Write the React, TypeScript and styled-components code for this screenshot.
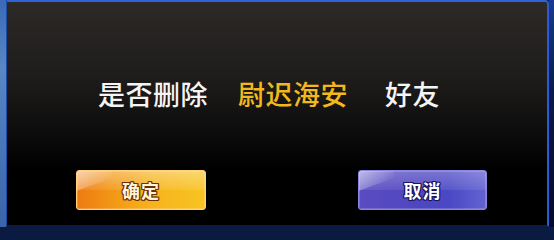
import styled, { createGlobalStyle } from "styled-components";

const GlobalStyle = createGlobalStyle`
	html, body {
		margin: 0;
		padding: 0;
		background: #0a1a40;
		overflow: hidden;
	}
`;

const Screen = styled.div`
	display: flex;
	width: 554px;
	height: 227px;
	font-family: "Noto Sans CJK SC", "Noto Sans", sans-serif;
`;

const SideStrip = styled.div<{ $tone: "light" | "dark" }>`
	width: ${(p) => (p.$tone === "light" ? "6px" : "5px")};
	background: ${(p) =>
		p.$tone === "light"
			? "linear-gradient(to bottom, #3a6ab8, #5a86c4 30%, #4a78b8 60%, #3a64a8)"
			: "linear-gradient(to bottom, #1a3a90, #0a1a50 40%, #050a28)"};
`;

const Panel = styled.div`
	flex: 1;
	display: flex;
	flex-direction: column;
	border-top: 2px solid #2f64d8;
	border-right: 2px solid #2a5cd0;
	border-left: 1px solid #1e4aa8;
	border-bottom: 2px solid #0c1a48;
	border-top-right-radius: 4px;
	background: linear-gradient(to bottom, #2c2927 0%, #1e1c1b 35%, #0a0a0a 62%, #000 75%, #000 100%);
`;

const Message = styled.div`
	display: flex;
	align-items: center;
	padding: 78px 0 0 91px;
	font-size: 27px;
	line-height: 27px;
	letter-spacing: 0.5px;
`;

const Segment = styled.span<{ $accent?: boolean; $gap?: number }>`
	color: ${(p) => (p.$accent ? "#f2b91e" : "#f4f4f4")};
	margin-left: ${(p) => p.$gap ?? 0}px;
	font-weight: 500;
`;

const ButtonRow = styled.div`
	display: flex;
	justify-content: space-between;
	padding: 0 60px 0 69px;
	margin-top: 63px;
`;

const GameButton = styled.button<{ $variant: "confirm" | "cancel" }>`
	position: relative;
	width: ${(p) => (p.$variant === "confirm" ? "130px" : "129px")};
	height: 40px;
	border-radius: 3px;
	border: 1px solid ${(p) => (p.$variant === "confirm" ? "#ffd27a" : "#8c86e0")};
	background: ${(p) =>
		p.$variant === "confirm"
			? "linear-gradient(to right, #ee7a12 0%, #f39a16 30%, #f6b41c 60%, #f8c423 100%)"
			: "linear-gradient(to right, #5a4cc2 0%, #4f46c0 45%, #4a48c4 70%, #6462d2 100%)"};
	box-shadow: inset 0 0 0 1px rgba(255, 255, 255, 0.18);
	overflow: hidden;
	padding: 0;
	cursor: pointer;
	font-family: "Noto Sans CJK SC", sans-serif;
	font-weight: 700;
	font-size: 18px;
	color: ${(p) => (p.$variant === "confirm" ? "#fff4d6" : "#ffffff")};
	text-shadow: ${(p) => {
		const c = p.$variant === "confirm" ? "#6e2c0a" : "#1c1660";
		return `1px 0 0 ${c}, -1px 0 0 ${c}, 0 1px 0 ${c}, 0 -1px 0 ${c}, 1px 1px 0 ${c}, -1px -1px 0 ${c}, 1px -1px 0 ${c}, -1px 1px 0 ${c}`;
	}};

	&::before {
		content: "";
		position: absolute;
		left: 0;
		right: 0;
		top: 0;
		height: 50%;
		background: linear-gradient(
			to bottom,
			rgba(255, 255, 255, ${(p) => (p.$variant === "confirm" ? 0.35 : 0.25)}),
			rgba(255, 255, 255, 0.08)
		);
	}

	&::after {
		content: "";
		position: absolute;
		left: -6px;
		top: -8px;
		width: 40px;
		height: 22px;
		transform: rotate(-20deg);
		background: linear-gradient(to bottom right, rgba(255, 255, 255, 0.6), rgba(255, 255, 255, 0));
	}

	> span {
		position: relative;
		z-index: 1;
		letter-spacing: 1px;
	}
`;

export default function App() {
	return (
		<>
			<GlobalStyle />
			<Screen>
				<SideStrip $tone="light" />
				<Panel>
					<Message>
						<Segment>是否删除</Segment>
						<Segment $accent $gap={30}>尉迟海安</Segment>
						<Segment $gap={37}>好友</Segment>
					</Message>
					<ButtonRow>
						<GameButton $variant="confirm">
							<span>确定</span>
						</GameButton>
						<GameButton $variant="cancel">
							<span>取消</span>
						</GameButton>
					</ButtonRow>
				</Panel>
				<SideStrip $tone="dark" />
			</Screen>
		</>
	);
}
